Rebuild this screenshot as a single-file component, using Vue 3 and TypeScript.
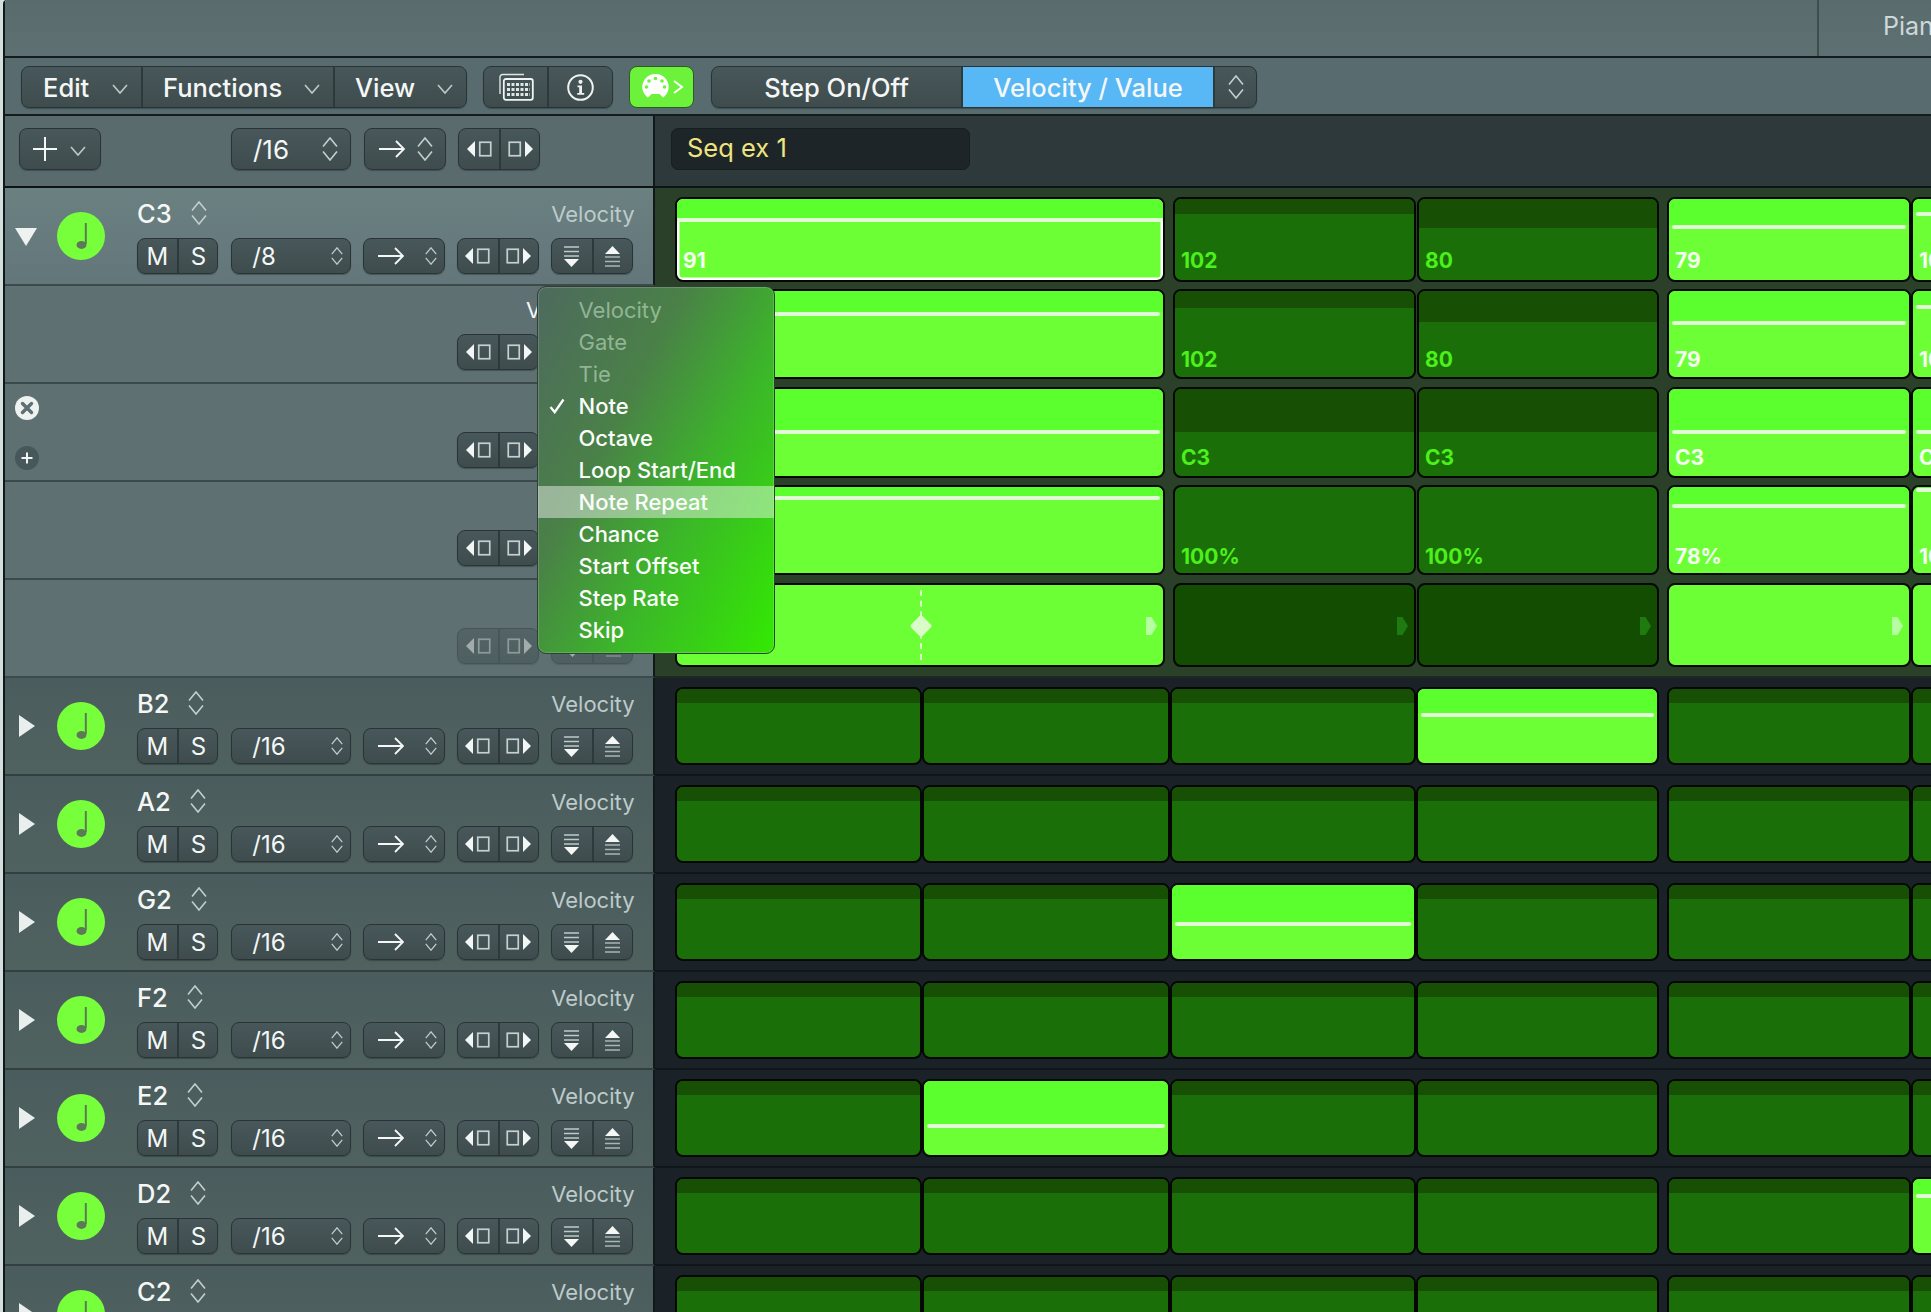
<script setup lang="ts">
interface Step {
  on?: boolean
  sel?: boolean
  wide?: boolean
  band?: number
  val?: string
  tri?: boolean
  dia?: boolean
  flat?: boolean
}
interface Lane {
  kind: 'main' | 'sub'
  name?: string
  rate?: string
  open?: boolean
  label?: string
  icons?: boolean
  dim?: boolean
  pt: number
  h: number
  pb: number
  steps: Step[]
}

function plain(lit: number, band: number): Step[] {
  return [0, 1, 2, 3, 4, 5].map((i) =>
    i === lit ? { on: true, band } : { band: 16 }
  )
}

const lanes: Lane[] = [
  {
    kind: 'main', name: 'C3', rate: '/8', open: true, pt: 9, h: 85, pb: 7,
    steps: [
      { on: true, sel: true, wide: true, band: 21, val: '91' },
      { band: 17, val: '102' },
      { band: 31, val: '80' },
      { on: true, band: 28, val: '79' },
      { on: true, band: 15, val: '102' }
    ]
  },
  {
    kind: 'sub', label: 'Velocity', pt: 3, h: 90, pb: 5,
    steps: [
      { on: true, wide: true, band: 23 },
      { band: 19, val: '102' },
      { band: 33, val: '80' },
      { on: true, band: 32, val: '79' },
      { on: true, band: 16, val: '102' }
    ]
  },
  {
    kind: 'sub', icons: true, pt: 3, h: 91, pb: 6,
    steps: [
      { on: true, wide: true, band: 43 },
      { band: 45, val: 'C3' },
      { band: 45, val: 'C3' },
      { on: true, band: 43, val: 'C3' },
      { on: true, band: 43, val: 'C3' }
    ]
  },
  {
    kind: 'sub', pt: 3, h: 90, pb: 4,
    steps: [
      { on: true, wide: true, band: 11 },
      { val: '100%' },
      { val: '100%' },
      { on: true, band: 19, val: '78%' },
      { on: true, band: 3, val: '100%' }
    ]
  },
  {
    kind: 'sub', dim: true, pt: 3, h: 84, pb: 4,
    steps: [
      { on: true, wide: true, flat: true, tri: true, dia: true },
      { flat: true, tri: true },
      { flat: true, tri: true },
      { on: true, flat: true, tri: true },
      { on: true, flat: true }
    ]
  },
  { kind: 'main', name: 'B2', rate: '/16', pt: 9, h: 78, pb: 6, steps: plain(3, 26) },
  { kind: 'main', name: 'A2', rate: '/16', pt: 9, h: 78, pb: 6, steps: plain(-1, 0) },
  { kind: 'main', name: 'G2', rate: '/16', pt: 9, h: 78, pb: 6, steps: plain(2, 39) },
  { kind: 'main', name: 'F2', rate: '/16', pt: 9, h: 78, pb: 6, steps: plain(-1, 0) },
  { kind: 'main', name: 'E2', rate: '/16', pt: 9, h: 78, pb: 6, steps: plain(1, 45) },
  { kind: 'main', name: 'D2', rate: '/16', pt: 9, h: 78, pb: 6, steps: plain(5, 17) },
  { kind: 'main', name: 'C2', rate: '/16', pt: 9, h: 78, pb: 6, steps: plain(-1, 0) }
]

const menu = [
  { t: 'Velocity', off: true },
  { t: 'Gate', off: true },
  { t: 'Tie', off: true },
  { t: 'Note', check: true },
  { t: 'Octave' },
  { t: 'Loop Start/End' },
  { t: 'Note Repeat', hi: true },
  { t: 'Chance' },
  { t: 'Start Offset' },
  { t: 'Step Rate' },
  { t: 'Skip' }
]
</script>

<template>
  <div class="app">
    <svg class="defs" aria-hidden="true">
      <symbol id="chev" viewBox="0 0 16 10">
        <path d="M1 1l7 8 7-8" fill="none" stroke="#b9c7c7" stroke-width="1.7" />
      </symbol>
      <symbol id="updown" viewBox="0 0 16 24">
        <path d="M1 9.5L8 1l7 8.5M1 14.5L8 23l7-8.5" fill="none" stroke="#c3cfcf" stroke-width="1.6" />
      </symbol>
      <symbol id="arrow" viewBox="0 0 26 18">
        <path d="M0 9h25M17 1l8 8-8 8" fill="none" stroke="#f4f7f6" stroke-width="1.9" />
      </symbol>
      <symbol id="sql" viewBox="0 0 25 16">
        <path d="M8 0v16L0 8z" fill="#f2f6f5" />
        <rect x="12.75" y="1.25" width="11" height="13.5" fill="none" stroke="#c5d1d1" stroke-width="1.7" />
      </symbol>
      <symbol id="sqr" viewBox="0 0 25 16">
        <path d="M17 0v16l8-8z" fill="#f2f6f5" />
        <rect x="1.25" y="1.25" width="11" height="13.5" fill="none" stroke="#c5d1d1" stroke-width="1.7" />
      </symbol>
      <symbol id="vdown" viewBox="0 0 15 21">
        <path d="M0 1h15M0 5.5h15M0 10h15" stroke="#bccaca" stroke-width="1.6" />
        <path d="M0 13h15l-7.5 8z" fill="#f4f7f6" />
      </symbol>
      <symbol id="vup" viewBox="0 0 15 21">
        <path d="M0 8h15L7.5 0z" fill="#f4f7f6" />
        <path d="M0 11h15M0 15.5h15M0 20h15" stroke="#a6b5b5" stroke-width="1.6" />
      </symbol>
    </svg>

    <div class="window">
      <header class="topbar">
        <div class="tab">Piano Roll</div>
      </header>

      <div class="toolbar">
        <div class="btn group menus">
          <div class="cell e">Edit<svg class="chev"><use href="#chev" /></svg></div>
          <div class="cell f">Functions<svg class="chev"><use href="#chev" /></svg></div>
          <div class="cell v">View<svg class="chev"><use href="#chev" /></svg></div>
        </div>
        <div class="btn group tools">
          <div class="cell ico">
            <svg width="37" height="28" viewBox="0 0 37 28" fill="none">
              <path d="M3 21V4a2.500 2.500 0 0 1 2.500-2.500H27" stroke="#dfe6e5" stroke-width="1.4" />
              <rect x="6.800" y="6" width="29" height="20.800" rx="2" stroke="#f0f4f3" stroke-width="1.800" />
              <path d="M10 11.500h23M10 16.500h23M10 21.500h23" stroke="#dfe6e5" stroke-width="3" stroke-dasharray="3 1.500" />
            </svg>
          </div>
          <div class="cell ico">
            <svg width="27" height="27" viewBox="0 0 27 27" fill="none">
              <circle cx="13.500" cy="13.500" r="12.300" stroke="#eef2f1" stroke-width="2" />
              <circle cx="13.500" cy="7.800" r="2.100" fill="#eef2f1" />
              <path d="M10.500 11.500h4.500v7.500h2.200v1.800h-7v-1.800h2v-5.700h-1.700z" fill="#eef2f1" />
            </svg>
          </div>
        </div>
        <div class="midi">
          <svg width="42" height="26" viewBox="0 0 42 26">
            <path d="M13.500 0a13 13 0 0 1 8 23.400c-1.400-.3-2.800-2-4-3.400h-8c-1.200 1.400-2.600 3.100-4 3.400A13 13 0 0 1 13.500 0z" fill="#fff" />
            <g fill="#6df23b">
              <circle cx="13.500" cy="4.500" r="1.800" />
              <circle cx="7" cy="7" r="1.800" />
              <circle cx="20" cy="7" r="1.800" />
              <circle cx="4.500" cy="13" r="1.800" />
              <circle cx="22.500" cy="13" r="1.800" />
            </g>
            <path d="M32 7l8 6-8 6" fill="none" stroke="#fff" stroke-width="2" />
          </svg>
        </div>
        <div class="btn group seg">
          <div class="cell s1">Step On/Off</div>
          <div class="cell s2">Velocity / Value</div>
          <div class="cell s3"><svg class="ud"><use href="#updown" /></svg></div>
        </div>
      </div>

      <div class="pattern">
        <div class="phead">
          <div class="btn cell addb">
            <svg width="24" height="24" viewBox="0 0 24 24"><path d="M12 0v24M0 12h24" stroke="#f4f7f6" stroke-width="2" /></svg>
            <svg class="chev"><use href="#chev" /></svg>
          </div>
          <div class="btn cell rate big">/16<svg class="ud"><use href="#updown" /></svg></div>
          <div class="btn cell dir">
            <svg class="arrow"><use href="#arrow" /></svg><svg class="ud"><use href="#updown" /></svg>
          </div>
          <div class="btn group pair">
            <div class="cell"><svg class="sq"><use href="#sql" /></svg></div>
            <div class="cell"><svg class="sq"><use href="#sqr" /></svg></div>
          </div>
        </div>
        <div class="pbody">
          <div class="title">Seq ex 1</div>
        </div>
      </div>

      <div class="rows">
        <div
          v-for="(r, ri) in lanes"
          :key="ri"
          class="row"
          :class="{ grp: ri < 5, first: ri === 0, last: ri === 4 }"
        >
          <div v-if="r.kind === 'main'" class="head main">
            <div class="tw">
              <span :class="r.open ? 'tri-down' : 'tri-right'"></span>
            </div>
            <div class="note">
              <svg width="14" height="30" viewBox="0 0 14 30" fill="none">
                <path d="M11.800 2v21" stroke="#5c7a55" stroke-width="2" />
                <ellipse cx="7.500" cy="24" rx="5" ry="3.900" fill="#5c7a55" />
              </svg>
            </div>
            <div class="mainc">
              <div class="labels">
                <span class="pitch">{{ r.name }}</span>
                <svg class="ud lab"><use href="#updown" /></svg>
                <span class="param">Velocity</span>
              </div>
              <div class="ctrls">
                <div class="btn group ms">
                  <div class="cell">M</div>
                  <div class="cell">S</div>
                </div>
                <div class="btn cell rate">{{ r.rate }}<svg class="ud sm"><use href="#updown" /></svg></div>
                <div class="btn cell dir">
                  <svg class="arrow"><use href="#arrow" /></svg><svg class="ud sm"><use href="#updown" /></svg>
                </div>
                <div class="btn group pair">
                  <div class="cell"><svg class="sq"><use href="#sql" /></svg></div>
                  <div class="cell"><svg class="sq"><use href="#sqr" /></svg></div>
                </div>
                <div class="btn group pair">
                  <div class="cell"><svg class="vs"><use href="#vdown" /></svg></div>
                  <div class="cell"><svg class="vs"><use href="#vup" /></svg></div>
                </div>
              </div>
            </div>
          </div>

          <div v-else class="head sub">
            <div class="subicons">
              <template v-if="r.icons">
                <svg width="24" height="24" viewBox="0 0 24 24">
                  <circle cx="12" cy="12" r="12" fill="#eef2f1" />
                  <path d="M7.500 7.500l9 9M16.500 7.500l-9 9" stroke="#5e7072" stroke-width="3.400" stroke-linecap="round" />
                </svg>
                <svg width="24" height="24" viewBox="0 0 24 24">
                  <circle cx="12" cy="12" r="12" fill="#465859" />
                  <path d="M12 6.500v11M6.500 12h11" stroke="#f2f5f4" stroke-width="2" />
                </svg>
              </template>
            </div>
            <div class="subc">
              <div class="sublabel">{{ r.label }}</div>
              <div class="ctrls" :class="{ dim: r.dim }">
                <div class="btn group pair">
                  <div class="cell"><svg class="sq"><use href="#sql" /></svg></div>
                  <div class="cell"><svg class="sq"><use href="#sqr" /></svg></div>
                </div>
                <div class="btn group pair">
                  <div class="cell"><svg class="vs"><use href="#vdown" /></svg></div>
                  <div class="cell"><svg class="vs"><use href="#vup" /></svg></div>
                </div>
              </div>
            </div>
          </div>

          <div class="lane" :style="{ paddingTop: r.pt + 'px' }">
            <div
              v-for="(s, si) in r.steps"
              :key="si"
              class="step"
              :class="{ on: s.on, sel: s.sel, wide: s.wide, flat: s.flat }"
              :style="{ height: r.h + 'px' }"
            >
              <div v-if="s.band" class="band" :style="{ height: s.band - 2 + 'px' }"></div>
              <div v-if="s.on && s.band" class="line"></div>
              <span v-if="s.val" class="val" :style="{ paddingBottom: r.pb + 'px' }">{{ s.val }}</span>
              <span v-if="s.tri" class="endtri"></span>
              <template v-if="s.dia">
                <span class="dash"></span>
                <span class="dia"></span>
              </template>
            </div>
          </div>
        </div>
      </div>
    </div>

    <div class="menu">
      <div
        v-for="m in menu"
        :key="m.t"
        class="mi"
        :class="{ off: m.off, hi: m.hi }"
      >
        <svg v-if="m.check" class="check" width="16" height="16" viewBox="0 0 16 16" fill="none">
          <path d="M1.500 9l4.200 5.200L14.500 1.500" stroke="#fff" stroke-width="2.300" />
        </svg>
        {{ m.t }}
      </div>
    </div>
  </div>
</template>

<style scoped>
.app {
  position: relative;
  width: 1931px;
  height: 1312px;
  overflow: hidden;
  background: #d3dfdd;
  padding-left: 3px;
  box-sizing: border-box;
  font-family: Inter, "Liberation Sans", sans-serif;
  color: #f4f7f6;
}
.defs {
  position: absolute;
  width: 0;
  height: 0;
}
.window {
  width: 1928px;
  height: 1312px;
  border-left: 2px solid #10181a;
  border-top-left-radius: 4px;
  box-sizing: border-box;
  overflow: hidden;
}
.topbar {
  height: 58px;
  box-sizing: border-box;
  border-bottom: 2px solid #151c1e;
  background: linear-gradient(#5a6b6d, #5f7072);
  display: flex;
  justify-content: flex-end;
}
.tab {
  width: 114px;
  flex: none;
  box-sizing: border-box;
  border-left: 2px solid #3f4d4f;
  padding: 11px 0 0 64px;
  font-size: 25px;
  line-height: 30px;
  color: #cdd8d8;
  white-space: nowrap;
  overflow: hidden;
}
.toolbar {
  height: 58px;
  box-sizing: border-box;
  border-bottom: 2px solid #151c1e;
  background: #586b6e;
  display: flex;
  align-items: flex-start;
  padding: 8px 0 0 16px;
}
.btn {
  background: linear-gradient(#485759, #3e4c4e);
  border: 1.5px solid #2a3436;
  border-radius: 8px;
  box-sizing: border-box;
  box-shadow: 0 1px 1px rgba(20, 28, 30, 0.35);
}
.group {
  display: flex;
  overflow: hidden;
}
.cell {
  display: flex;
  align-items: center;
  justify-content: center;
  box-sizing: border-box;
}
.group .cell + .cell {
  border-left: 2px solid #2d393b;
}
.menus,
.tools,
.seg {
  height: 42px;
  font-size: 25.5px;
  font-weight: 500;
}
.menus {
  width: 446px;
}
.menus .cell {
  justify-content: flex-start;
  position: relative;
}
.cell.e {
  width: 119px;
  padding-left: 21px;
}
.cell.f {
  width: 192px;
  padding-left: 20px;
}
.cell.v {
  flex: 1;
  padding-left: 20px;
}
.chev {
  width: 16px;
  height: 10px;
}
.menus .chev {
  margin-left: auto;
  margin-right: 13px;
  margin-top: 3px;
}
.tools {
  width: 130px;
  margin-left: 16px;
}
.ico {
  flex: 1;
}
.midi {
  width: 65px;
  height: 42px;
  margin-left: 16px;
  background: #6df23b;
  border: 1.5px solid #2f5a24;
  border-radius: 8px;
  box-sizing: border-box;
  display: flex;
  align-items: center;
  padding-left: 12px;
}
.seg {
  width: 546px;
  margin-left: 17px;
}
.s1 {
  width: 249px;
}
.group .s2 {
  width: 252px;
  background: #57b8f5;
  border-left: 0;
}
.group .s3 {
  flex: 1;
  border-left: 0;
}
.ud {
  width: 16px;
  height: 24px;
  flex: none;
}
.ud.sm {
  width: 12px;
  height: 18px;
}
.pattern {
  height: 72px;
  box-sizing: border-box;
  border-bottom: 2px solid #0e1416;
  display: flex;
}
.phead {
  width: 650px;
  flex: none;
  box-sizing: border-box;
  border-right: 2px solid #10181a;
  background: #5a6b6e;
  display: flex;
  align-items: flex-start;
  padding: 12px 0 0 14px;
}
.addb {
  width: 82px;
  height: 42px;
  justify-content: flex-start;
  padding-left: 13px;
}
.addb .chev {
  margin-left: 13px;
  margin-top: 3px;
}
.phead .rate {
  margin-left: 130px;
}
.rate {
  width: 120px;
  height: 36px;
  justify-content: space-between;
  padding: 0 7px 0 20px;
  font-size: 24px;
}
.rate.big {
  height: 42px;
  font-size: 26px;
  padding-left: 21px;
  padding-right: 12px;
}
.dir {
  width: 82px;
  height: 36px;
  margin-left: 12px;
  justify-content: space-between;
  padding: 0 7px 0 14px;
}
.phead .dir {
  height: 42px;
  margin-left: 13px;
  padding-right: 12px;
}
.arrow {
  width: 26px;
  height: 18px;
}
.pair {
  width: 82px;
  height: 36px;
  margin-left: 12px;
}
.phead .pair {
  height: 42px;
}
.pair .cell,
.ms .cell {
  width: 50%;
}
.sq {
  width: 25px;
  height: 16px;
}
.vs {
  width: 15px;
  height: 21px;
}
.pbody {
  flex: 1;
  background: #2e393b;
  padding: 12px 0 0 16px;
}
.title {
  width: 299px;
  height: 42px;
  background: #1d2528;
  border: 1px solid #171e20;
  border-radius: 7px;
  box-sizing: border-box;
  padding-left: 15px;
  font-size: 25.5px;
  line-height: 38px;
  color: #efe47f;
}
.row {
  display: flex;
  height: 98px;
}
.head {
  width: 650px;
  flex: none;
  box-sizing: border-box;
  border-right: 2px solid #10181a;
  border-bottom: 2px solid #33403f;
  background: linear-gradient(#4b5c5e, #50625f);
  display: flex;
}
.grp .head {
  background: linear-gradient(#5f7072, #5e7071);
  border-bottom-color: #3c4a4c;
}
.first .head {
  background: linear-gradient(#6b8081, #63777a);
}
.tw {
  width: 44px;
  flex: none;
  height: 96px;
  display: flex;
  align-items: center;
  justify-content: center;
}
.tri-right {
  width: 0;
  height: 0;
  border-left: 16px solid #e9efed;
  border-top: 11px solid transparent;
  border-bottom: 11px solid transparent;
}
.tri-down {
  width: 0;
  height: 0;
  border-top: 18px solid #eef2f1;
  border-left: 11px solid transparent;
  border-right: 11px solid transparent;
  margin-right: 2px;
  margin-top: 2px;
}
.note {
  width: 48px;
  height: 48px;
  margin-top: 24px;
  margin-left: 8px;
  flex: none;
  border-radius: 50%;
  background: #78ff3c;
  display: flex;
  align-items: center;
  justify-content: center;
}
.mainc {
  width: 496px;
  margin-left: 31.5px;
}
.labels {
  height: 50px;
  display: flex;
  align-items: center;
  padding-left: 0.5px;
  box-sizing: border-box;
}
.pitch {
  font-size: 25.5px;
  font-weight: 500;
}
.ud.lab {
  margin-left: 19px;
}
.param {
  margin-left: auto;
  margin-right: -2px;
  margin-top: 2px;
  font-size: 22px;
  color: #bdcbca;
}
.ctrls {
  display: flex;
}
.ms {
  width: 82px;
  height: 36px;
  font-size: 24px;
}
.ctrls .rate {
  margin-left: 13px;
}
.dim {
  opacity: 0.45;
}
.sub {
  padding-left: 10px;
}
.subicons {
  width: 24px;
  flex: none;
  padding-top: 12px;
  display: flex;
  flex-direction: column;
  gap: 26px;
}
.subc {
  width: 196px;
  margin-left: auto;
}
.sublabel {
  height: 48px;
  box-sizing: border-box;
  padding-left: 69px;
  font-size: 22px;
  line-height: 48px;
  white-space: nowrap;
}
.subc .ctrls .pair:first-child {
  margin-left: 0;
}
.lane {
  flex: none;
  width: 1300px;
  box-sizing: border-box;
  padding-left: 20px;
  background: #1a2227;
  border-bottom: 2px solid #0f1519;
  display: grid;
  grid-template-columns: 247px 248px 246px 251px 244px 100px;
  align-items: start;
}
.grp .lane {
  background: #2a4029;
  border-bottom: 0;
}
.row.last .lane {
  border-bottom: 2px solid #1c2a22;
}
.step {
  position: relative;
  box-sizing: border-box;
  border: 2px solid #040704;
  border-radius: 8px;
  background: #1b6f09;
  overflow: hidden;
  display: flex;
  flex-direction: column;
}
.step.on {
  background: #6cff36;
}
.row:not(.grp) .step:nth-child(4) {
  margin-right: 8px;
}
.step.wide {
  grid-column: span 2;
  margin-right: 5px;
}
.wide + .step {
  margin-left: 3px;
}
.wide + .step + .step {
  margin-left: 1px;
  margin-right: 8px;
}
.step.sel {
  box-shadow: inset 0 0 0 2.5px #fff;
}
.step.flat {
  background: #124d02;
}
.step.on.flat {
  background: #6cff36;
}
.band {
  background: #174f05;
  flex: none;
}
.on .band {
  background: #5aff2d;
}
.line {
  flex: none;
  height: 4px;
  margin: 0 3px;
  border-radius: 2px;
  background: #e2fbd7;
}
.sel .line {
  margin: 0;
  border-radius: 0;
}
.val {
  margin-top: auto;
  padding-left: 6px;
  font-size: 21px;
  line-height: 24px;
  font-weight: 700;
  color: #4cf01a;
  white-space: nowrap;
}
.on .val {
  color: #f6fff2;
}
.endtri {
  position: absolute;
  right: 6px;
  top: 32px;
  width: 11px;
  height: 18px;
  background: #1f7a10;
  clip-path: polygon(0 0, 50% 0, 100% 50%, 50% 100%, 0 100%);
}
.on .endtri {
  background: #b6ffa0;
}
.dash {
  position: absolute;
  left: 50%;
  top: 5px;
  bottom: 5px;
  margin-left: 0;
  border-left: 2px dashed #d8fbc8;
}
.dia {
  position: absolute;
  left: 50%;
  top: 41px;
  width: 16px;
  height: 16px;
  margin: -8px 0 0 -7px;
  border-radius: 2px;
  background: #d8fbc8;
  transform: rotate(45deg);
}
.menu {
  position: absolute;
  left: 537px;
  top: 286px;
  width: 238px;
  height: 368px;
  box-sizing: border-box;
  padding: 6.5px 0;
  border: 1.5px solid #2f3f35;
  border-radius: 9px;
  box-shadow: inset 0 0 0 1px rgba(255, 255, 255, 0.16);
  background: linear-gradient(118deg, #4e6a5e 0%, #4a8048 34%, #3cb52a 62%, #33ea02 100%);
  overflow: hidden;
}
.mi {
  position: relative;
  height: 32px;
  line-height: 32px;
  padding-left: 40.5px;
  font-size: 22px;
  font-weight: 500;
  color: #fbfdfb;
  white-space: nowrap;
}
.mi.off {
  font-weight: 400;
  color: rgba(220, 240, 220, 0.5);
}
.mi.hi {
  background: rgba(255, 255, 255, 0.44);
}
.check {
  position: absolute;
  left: 10.5px;
  top: 8px;
}
</style>
